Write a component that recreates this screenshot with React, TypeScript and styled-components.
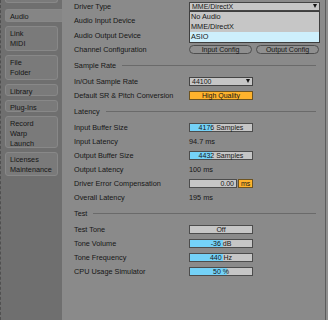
import React from 'react';
import styled, { createGlobalStyle } from 'styled-components';

const GlobalStyle = createGlobalStyle`
  html, body {
    margin: 0;
    padding: 0;
    background: #8a8a8a;
  }
  body {
    font-family: "Liberation Sans", Arial, sans-serif;
    color: #161616;
  }
`;

const Frame = styled.div`
  display: flex;
  width: 328px;
  height: 320px;
  overflow: hidden;
  background: #8a8a8a;
`;

const Sidebar = styled.div`
  width: 62px;
  flex-shrink: 0;
  box-sizing: border-box;
  background: #6f6f6f;
  border-left: 1px dashed #505050;
  padding-left: 4px;
  overflow: hidden;
`;

const TabList = styled.div`
  display: flex;
  flex-direction: column;
  gap: 4px;
`;

// bottom of the tab scrolled out above the list
const TabStub = styled.div`
  box-sizing: border-box;
  width: 53px;
  height: 3px;
  margin-bottom: 2px;
  background: #7a7a7a;
  border: 1px solid #888888;
  border-top: none;
  border-radius: 0 0 3px 3px;
`;

const Tab = styled.div<{ $active?: boolean; $h: number }>`
  box-sizing: border-box;
  height: ${(p) => p.$h}px;
  width: ${(p) => (p.$active ? 57 : 53)}px;
  padding: 2px 4px 0;
  background: ${(p) => (p.$active ? '#858585' : '#7a7a7a')};
  border: 1px solid #888888;
  border-right: ${(p) => (p.$active ? 'none' : '1px solid #888888')};
  border-radius: ${(p) => (p.$active ? '3px 0 0 3px' : '3px')};
  font-size: 7.3px;
  line-height: 10px;
  color: #161616;
`;

const Main = styled.div`
  width: 263px;
  flex-shrink: 0;
  box-sizing: border-box;
  padding: 0 9px 0 12px;
  display: flex;
  flex-direction: column;
`;

const RightEdge = styled.div`
  flex: 1;
  border-left: 1px solid #5c5c5c;
  background: #8e8e8e;
`;

const Row = styled.div<{ $h?: number }>`
  display: grid;
  grid-template-columns: 115px auto;
  align-items: center;
  height: ${(p) => p.$h ?? 14}px;
  font-size: 7.3px;
`;

const Label = styled.span`
  color: #161616;
  white-space: nowrap;
`;

const Controls = styled.div<{ $gap?: number }>`
  display: flex;
  align-items: center;
  gap: ${(p) => p.$gap ?? 4}px;
  position: relative;
`;

const SectionHeader = styled.div`
  display: flex;
  align-items: center;
  height: 18px;
  font-size: 7.3px;
  gap: 6px;
  &::after {
    content: '';
    flex: 1;
    height: 1px;
    background: #6a6a6a;
  }
`;

const Select = styled.div<{ $w: number }>`
  box-sizing: border-box;
  width: ${(p) => p.$w}px;
  height: 9px;
  display: flex;
  align-items: center;
  justify-content: space-between;
  padding: 0 2px;
  background: #c6c6c6;
  border: 1px solid #444;
  font-size: 7px;
  line-height: 7px;
`;

const Arrow = styled.span`
  width: 0;
  height: 0;
  border-left: 2.5px solid transparent;
  border-right: 2.5px solid transparent;
  border-top: 4px solid #111;
`;

const Popup = styled.div`
  position: absolute;
  top: 9px;
  left: 0;
  width: 131px;
  box-sizing: border-box;
  background: #c6c6c6;
  border: 1px solid #3e3e3e;
  z-index: 2;
`;

const PopupItem = styled.div<{ $hl?: boolean }>`
  height: 10px;
  line-height: 10px;
  padding-left: 1px;
  font-size: 7.3px;
  background: ${(p) => (p.$hl ? '#cdeffc' : 'transparent')};
`;

const PillButton = styled.div`
  box-sizing: border-box;
  width: 63px;
  height: 9px;
  border: 1px solid #4e4e4e;
  border-radius: 5px;
  background: #8f8f8f;
  font-size: 7px;
  line-height: 7px;
  text-align: center;
`;

const ValueBox = styled.div<{ $w?: number; $tone?: 'gray' | 'orange'; $fill?: number; $align?: string }>`
  box-sizing: border-box;
  width: ${(p) => p.$w ?? 64}px;
  height: 9px;
  border: 1px solid ${(p) => (p.$tone === 'orange' ? '#6d5320' : '#4c4c4c')};
  background: ${(p) =>
    p.$tone === 'orange'
      ? '#ffb32c'
      : p.$fill
      ? `linear-gradient(to right, #74d2f8 0 ${p.$fill}%, #c6c6c6 ${p.$fill}% 100%)`
      : '#c6c6c6'};
  font-size: 7px;
  line-height: 7px;
  text-align: ${(p) => p.$align ?? 'center'};
  padding: 0 2px;
  white-space: nowrap;
`;

const PlainValue = styled.span`
  font-size: 7.3px;
`;

const tabs = [
  { lines: ['Audio'], h: 13, active: true },
  { lines: ['Link', 'MIDI'], h: 25 },
  { lines: ['File', 'Folder'], h: 25 },
  { lines: ['Library'], h: 12 },
  { lines: ['Plug-Ins'], h: 12 },
  { lines: ['Record', 'Warp', 'Launch'], h: 32 },
  { lines: ['Licenses', 'Maintenance'], h: 24 },
];

export default function App() {
  return (
    <>
      <GlobalStyle />
      <Frame>
        <Sidebar>
          <TabList>
            <TabStub />
            {tabs.map((t, i) => (
              <Tab key={i} $h={t.h} $active={t.active}>
                {t.lines.map((l) => (
                  <div key={l}>{l}</div>
                ))}
              </Tab>
            ))}
          </TabList>
        </Sidebar>
        <Main>
          <Row $h={12}>
            <Label>Driver Type</Label>
            <Controls>
              <Select $w={131}>
                <span>MME/DirectX</span>
                <Arrow />
              </Select>
              <Popup>
                <PopupItem>No Audio</PopupItem>
                <PopupItem>MME/DirectX</PopupItem>
                <PopupItem $hl>ASIO</PopupItem>
              </Popup>
            </Controls>
          </Row>
          <Row $h={16}>
            <Label>Audio Input Device</Label>
          </Row>
          <Row>
            <Label>Audio Output Device</Label>
          </Row>
          <Row>
            <Label>Channel Configuration</Label>
            <Controls>
              <PillButton>Input Config</PillButton>
              <PillButton>Output Config</PillButton>
            </Controls>
          </Row>

          <SectionHeader>Sample Rate</SectionHeader>
          <Row>
            <Label>In/Out Sample Rate</Label>
            <Controls>
              <Select $w={64}>
                <span>44100</span>
                <Arrow />
              </Select>
            </Controls>
          </Row>
          <Row>
            <Label>Default SR &amp; Pitch Conversion</Label>
            <Controls>
              <ValueBox $tone="orange">High Quality</ValueBox>
            </Controls>
          </Row>

          <SectionHeader>Latency</SectionHeader>
          <Row>
            <Label>Input Buffer Size</Label>
            <Controls>
              <ValueBox $fill={35}>4176 Samples</ValueBox>
            </Controls>
          </Row>
          <Row>
            <Label>Input Latency</Label>
            <PlainValue>94.7 ms</PlainValue>
          </Row>
          <Row>
            <Label>Output Buffer Size</Label>
            <Controls>
              <ValueBox $fill={35}>4432 Samples</ValueBox>
            </Controls>
          </Row>
          <Row>
            <Label>Output Latency</Label>
            <PlainValue>100 ms</PlainValue>
          </Row>
          <Row>
            <Label>Driver Error Compensation</Label>
            <Controls $gap={1}>
              <ValueBox $w={48} $align="right">0.00</ValueBox>
              <ValueBox $w={15} $tone="orange">ms</ValueBox>
            </Controls>
          </Row>
          <Row>
            <Label>Overall Latency</Label>
            <PlainValue>195 ms</PlainValue>
          </Row>

          <SectionHeader>Test</SectionHeader>
          <Row>
            <Label>Test Tone</Label>
            <Controls>
              <ValueBox>Off</ValueBox>
            </Controls>
          </Row>
          <Row>
            <Label>Tone Volume</Label>
            <Controls>
              <ValueBox $fill={53}>-36 dB</ValueBox>
            </Controls>
          </Row>
          <Row>
            <Label>Tone Frequency</Label>
            <Controls>
              <ValueBox $fill={53}>440 Hz</ValueBox>
            </Controls>
          </Row>
          <Row>
            <Label>CPU Usage Simulator</Label>
            <Controls>
              <ValueBox $fill={60}>50 %</ValueBox>
            </Controls>
          </Row>
        </Main>
        <RightEdge />
      </Frame>
    </>
  );
}
